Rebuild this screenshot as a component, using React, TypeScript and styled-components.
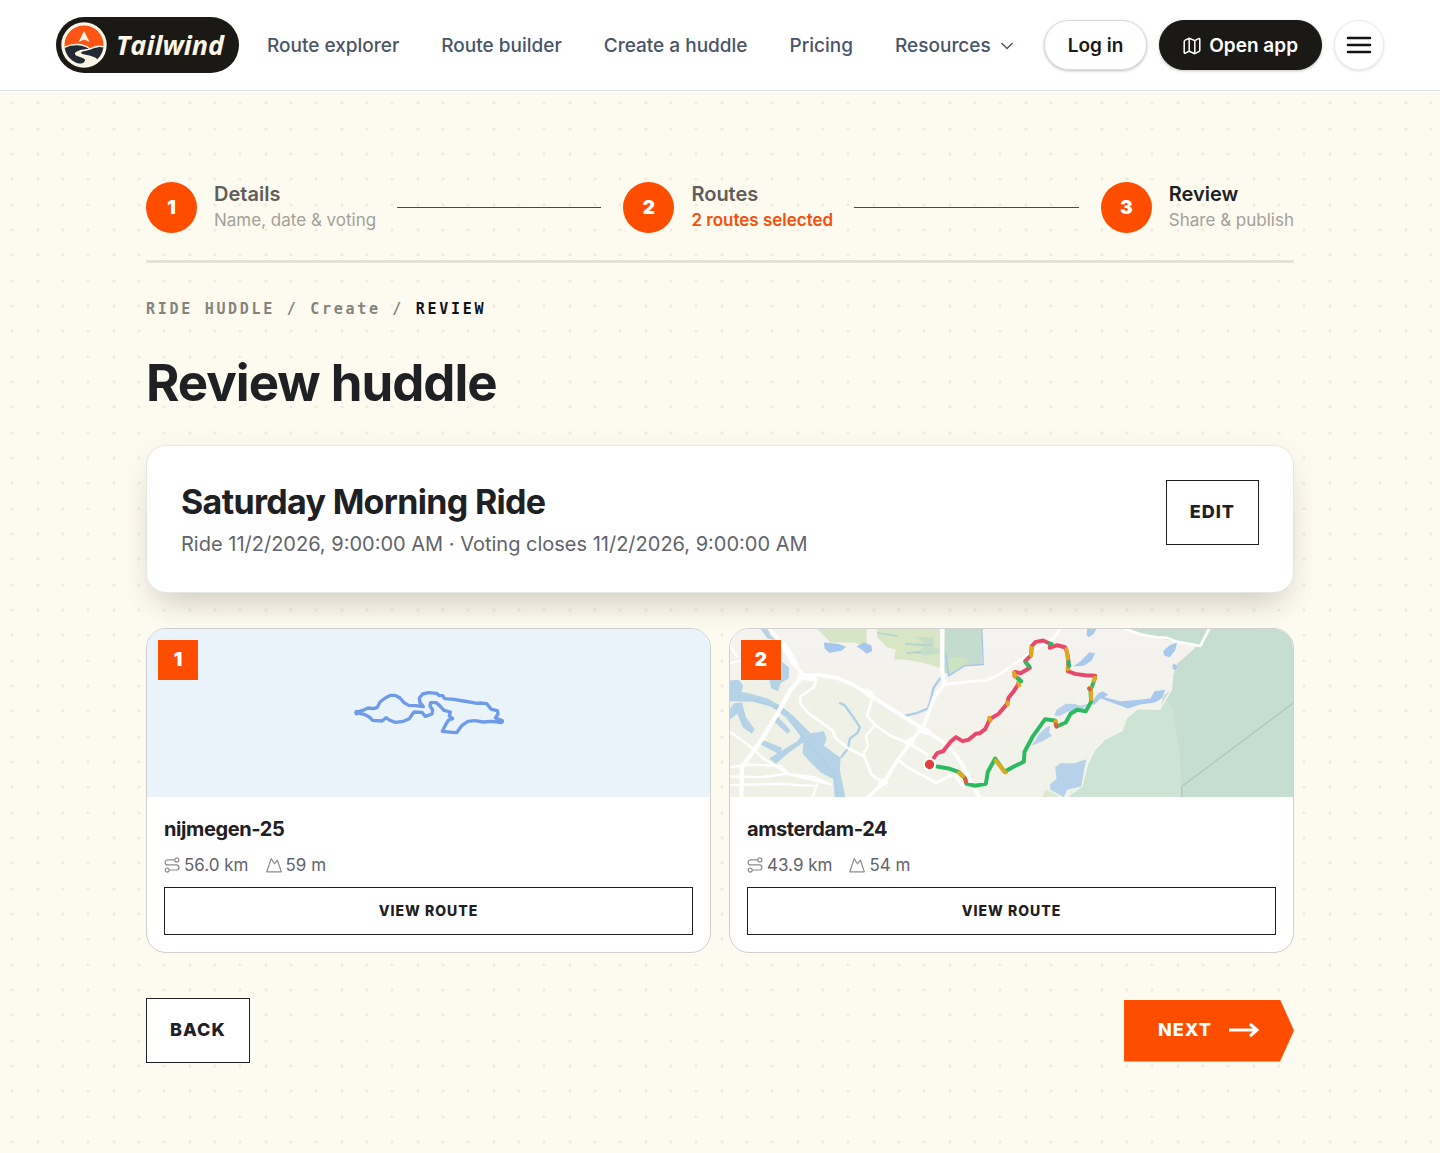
import React from "react";
import styled, { createGlobalStyle, css } from "styled-components";

const ink = "#1f2023";
const orange = "#ff4d00";
const sans = `Inter, "Liberation Sans", sans-serif`;
const mono = `"DejaVu Sans Mono", "Liberation Mono", monospace`;

/* Three dots per 76px tile in each direction. */
const stops = [12, 38, 63];
const dotGrid = stops
  .flatMap((y) =>
    stops.map(
      (x) =>
        `radial-gradient(circle at ${x}px ${y}px, #eeece2 1px, transparent 2px)`
    )
  )
  .join(", ");

const Global = createGlobalStyle`
  *, *::before, *::after { box-sizing: border-box; }
  html { min-height: 100%; background: #fdfaef; }
  body { margin: 0; font-family: ${sans}; color: ${ink}; }
  h1, h2, h3, p, ol { margin: 0; padding: 0; }
  h1, h2, h3 { font-weight: 700; letter-spacing: -0.02em; }
  ol { list-style: none; }
  button { font-family: inherit; cursor: pointer; }
`;

const Page = styled.div`
  min-height: 100vh;
  display: flex;
  flex-direction: column;
`;

const Header = styled.header`
  display: flex;
  align-items: center;
  height: 91px;
  padding: 0 56px;
  background: #fff;
  border-bottom: 1px solid #e2e5ea;
`;

const Brand = styled.a`
  display: flex;
  align-items: center;
  gap: 9px;
  min-width: 183px;
  height: 56px;
  padding: 0 5px;
  border-radius: 28px;
  background: #1a1916;
  color: #fbf5e6;
  font: italic 700 27px/32px "Open Sans", ${sans};
  text-decoration: none;
  svg { flex: none; }
`;

const Nav = styled.nav`
  display: flex;
  align-items: center;
  gap: 42px;
  margin-left: 28px;
`;

const navItem = css`
  display: flex;
  align-items: center;
  gap: 8px;
  padding: 2px 0 0;
  border: 0;
  background: none;
  color: #4a5567;
  font: 500 19px/28px ${sans};
  white-space: nowrap;
  text-decoration: none;
`;
const NavLink = styled.a`${navItem}`;
const NavButton = styled.button`${navItem}`;

const Actions = styled.div`
  display: flex;
  align-items: center;
  gap: 12px;
  margin-left: auto;
`;

const Pill = styled.a<{ $dark?: boolean }>`
  display: flex;
  align-items: center;
  gap: 8px;
  height: 50px;
  padding: 2px 23px 0;
  border-radius: 25px;
  border: 1px solid ${(p) => (p.$dark ? "#1a1916" : "#d9dadd")};
  background: ${(p) => (p.$dark ? "#1a1916" : "#fff")};
  color: ${(p) => (p.$dark ? "#fff" : "#1a1916")};
  box-shadow: 0 1px 3px rgba(0, 0, 0, 0.25);
  font: 600 19px/28px ${sans};
  white-space: nowrap;
  text-decoration: none;
`;

const MenuButton = styled.button`
  display: grid;
  place-items: center;
  width: 50px;
  height: 50px;
  padding: 0;
  border: 1px solid #ececef;
  border-radius: 50%;
  background: #fff;
  box-shadow: 0 1px 3px rgba(0, 0, 0, 0.14);
`;

const Canvas = styled.main`
  flex: 1;
  padding: 90px 40px;
  background-color: #fdfaef;
  background-image: ${dotGrid};
  background-size: 76px 76px;
`;

const Content = styled.div`
  max-width: 1148px;
  margin: 0 auto;
`;

const Steps = styled.ol`
  display: flex;
  align-items: center;
  padding-bottom: 27px;
  border-bottom: 3px solid #e4e2d8;
`;

const Step = styled.li`
  display: flex;
  flex: 1;
  align-items: center;
  gap: 17px;
  &:last-child { flex: none; }
`;

const StepNumber = styled.span`
  display: grid;
  place-items: center;
  width: 51px;
  height: 51px;
  border-radius: 50%;
  background: ${orange};
  color: #fff;
  font-size: 19px;
  font-weight: 900;
`;

const StepTitle = styled.p<{ $current?: boolean }>`
  color: ${(p) => (p.$current ? ink : "#5f5e5c")};
  font-size: 20px;
  font-weight: 600;
  line-height: 26px;
`;

const StepNote = styled.p<{ $strong?: boolean }>`
  color: ${(p) => (p.$strong ? "#f4500c" : "#a3a19b")};
  font-size: 17px;
  font-weight: ${(p) => (p.$strong ? 600 : 400)};
  line-height: 26px;
  white-space: nowrap;
`;

const Connector = styled.span`
  flex: 1;
  height: 1px;
  margin: 0 22px 0 4px;
  background: #4b4949;
`;

const Crumbs = styled.nav`
  margin-top: 36px;
  color: #85837d;
  font: 700 15px/20px ${mono};
  letter-spacing: 0.18em;
  white-space: pre;
  a { color: inherit; text-decoration: none; }
  strong { color: #131417; }
`;

const PageTitle = styled.h1`
  margin-top: 32px;
  font-size: 51px;
  line-height: 64px;
`;

const Summary = styled.section`
  display: flex;
  align-items: flex-start;
  justify-content: space-between;
  gap: 24px;
  margin-top: 30px;
  padding: 34px;
  border: 1px solid #e6e6e4;
  border-radius: 20px;
  background: #fff;
  box-shadow: 0 20px 32px -14px rgba(50, 45, 30, 0.22),
    0 8px 36px rgba(50, 45, 30, 0.05);
`;

const RideName = styled.h2`
  font-size: 34px;
  line-height: 44px;
`;

const RideDates = styled.p`
  margin-top: 6px;
  color: #62646b;
  font-size: 20px;
  line-height: 28px;
`;

const actionText = css<{ $small?: boolean }>`
  font-size: ${(p) => (p.$small ? 14 : 18)}px;
  font-weight: 800;
  letter-spacing: 1px;
`;

const OutlineButton = styled.button<{ $small?: boolean }>`
  ${actionText}
  width: ${(p) => (p.$small ? "100%" : "auto")};
  height: ${(p) => (p.$small ? 48 : 65)}px;
  padding: 0 23px 2px;
  border: 1px solid ${ink};
  background: #fff;
  color: ${ink};
`;

const Routes = styled.section`
  display: grid;
  grid-template-columns: 1fr 1fr;
  gap: 18px;
  margin-top: 35px;
`;

const Card = styled.article`
  position: relative;
  overflow: hidden;
  border: 1px solid #cfcfd1;
  border-radius: 20px;
  background: #fff;
`;

const Badge = styled.span`
  position: absolute;
  top: 11px;
  left: 11px;
  display: grid;
  place-items: center;
  width: 40px;
  height: 40px;
  padding-bottom: 2px;
  background: ${orange};
  color: #fff;
  font-size: 19px;
  font-weight: 900;
`;

const Preview = styled.div`
  display: grid;
  place-items: center;
  height: 168px;
  background: #eaf3fa;
  overflow: hidden;
`;

const CardBody = styled.div`
  padding: 18px 17px 17px;
`;

const RouteName = styled.h3`
  font-size: 20px;
  line-height: 28px;
`;

const Stats = styled.div`
  display: flex;
  gap: 17px;
  margin: 8px 0;
`;

const Stat = styled.span`
  display: flex;
  align-items: center;
  gap: 4px;
  color: #62646b;
  font-size: 17px;
  line-height: 28px;
  svg { color: #8d8d8f; }
`;

const Footer = styled.div`
  display: flex;
  align-items: center;
  justify-content: space-between;
  margin-top: 45px;
`;

const NextButton = styled.button`
  ${actionText}
  display: flex;
  align-items: center;
  gap: 17px;
  height: 62px;
  padding: 0 34px 2px;
  border: 0;
  background: ${orange};
  clip-path: polygon(0 0, calc(100% - 14px) 0, 100% 50%, calc(100% - 14px) 100%, 0 100%);
  color: #fff;
`;

const LogoMark = () => (
  <svg width="46" height="46" viewBox="0 0 46 46" aria-hidden="true">
    <defs>
      <clipPath id="mark"><circle cx="23" cy="23" r="19.5" /></clipPath>
    </defs>
    <circle cx="23" cy="23" r="22.7" fill="#fbf5e6" />
    <g clipPath="url(#mark)">
      <path d="M0 0H46V26C38 23 34 25 29 27C22 22 14 22 4 26H0Z" fill="#ff5514" />
      <path d="M2 27C9 22 22 22 28 27C18 27 10 31 16 34C22 36 27 37 22 41C14 44 6 38 4 32Z" fill="#232a33" />
      <path d="M44 25C34 24 30 28 24 29C18 30 19 32 26 33C36 35 38 38 38 41C42 38 44 34 44 25Z" fill="#232a33" />
      <path d="M2 26C12 20 24 22 29 27C35 23 40 24 44 25" fill="none" stroke="#fbf5e6" strokeWidth="1.3" />
    </g>
    <path d="M23 9L28.6 20L23 17.6L17.6 20Z" fill="#fbf5e6" />
  </svg>
);

const RouteIcon = () => (
  <svg width="16" height="16" viewBox="0 0 16 16" fill="none" stroke="currentColor" strokeWidth="1.2" aria-hidden="true">
    <circle cx="12.8" cy="2.9" r="2" />
    <circle cx="3.2" cy="13.1" r="2" />
    <path d="M10.8 2.9H3.6a2.5 2.5 0 0 0 0 5H12.4a2.5 2.5 0 0 1 0 5.1H5.2" />
  </svg>
);

const PeakIcon = () => (
  <svg width="16" height="16" viewBox="0 0 16 16" fill="none" stroke="currentColor" strokeWidth="1.2" strokeLinejoin="round" aria-hidden="true">
    <path d="M.8 14.8L5.2 1.6L8.4 6.8L11.4 3.2L15.3 14.8Z" />
  </svg>
);

const MapIcon = () => (
  <svg width="18" height="18" viewBox="0 0 18 18" fill="none" stroke="currentColor" strokeWidth="1.5" strokeLinejoin="round" aria-hidden="true">
    <path d="M1.2 4.6Q1.2 3.6 2.2 3.1L6.2 1.3L11.8 3.6L15.6 1.6Q16.8 1.2 16.8 2.4V13.2Q16.8 14.2 15.8 14.7L11.8 16.7L6.2 14.2L2.4 16.2Q1.2 16.6 1.2 15.4ZM6.2 1.3V14.2M11.8 3.6V16.7" />
  </svg>
);

const LoopRoute = () => (
  <svg width="180" height="80" viewBox="-3 9 540 240" fill="none" stroke="#6d9bea" strokeWidth="10" strokeLinejoin="round" strokeLinecap="round" role="img" aria-label="nijmegen-25 route">
    <path d="M48 128L66 122L84 114L100 116L112 112L120 96L136 84L152 76L166 76L180 84L192 98L206 106L228 107L250 110L240 98L238 84L248 72L266 68L290 70L298 77L308 77L314 86L342 88L370 93L412 100L420 99L440 101L454 118L472 122L474 132L466 144L486 152L484 158L474 156L452 154L430 156L404 152L384 154L366 166L350 188L338 187L307 184L318 162L326 150L338 146L328 138L331 126L312 121L298 106L288 98L272 98L270 108L278 120L276 132L256 139L246 127L222 126L208 146L190 154L166 157L148 150L138 143L126 153L98 151L88 141L72 133Z" />
    <path d="M50 126V130M480 154H486" strokeWidth="13" />
  </svg>
);

const AreaMap = () => (
  <svg width="100%" height="168" viewBox="28 25 1690 505" preserveAspectRatio="xMidYMid slice" fill="none" strokeLinecap="round" strokeLinejoin="round" role="img" aria-label="amsterdam-24 route map">
    <defs>
      <linearGradient id="land" x1="0" y1="0" x2="0" y2="1">
        <stop offset="0" stopColor="#f5f2ef" />
        <stop offset="0.45" stopColor="#f4f2ed" />
        <stop offset="0.7" stopColor="#f1f2e9" />
      </linearGradient>
    </defs>
    <rect x="0" y="0" width="1760" height="560" fill="url(#land)" />
    <path d="M28 180L240 190L300 176L400 200L560 310L540 400L440 530H28Z" fill="#eff1e7" />
    <path d="M290 25H438V84L404 66L330 66Z" fill="#d5e5c5" />
    <path d="M468 25H658V142L604 126L552 118L520 116L526 88L500 80L470 50Z" fill="#d8e6c6" />
    <path d="M586 48L640 52V84L658 86V98L618 104L584 100L610 80L570 74L610 66Z" fill="#c5deca" />
    <path d="M672 25H784V132L730 136L690 164L672 156Z" fill="#c4dccd" />
    <path d="M680 114L706 108L748 118L730 138L690 164Z" fill="#cde2c2" />
    <path d="M784 25L788 132L732 136L684 166L676 100" stroke="#a5c5ec" strokeWidth="4" />
    <path d="M474 38L528 46M556 70L630 74M560 98L600 94" stroke="#b3d3cc" strokeWidth="5" />
    <path d="M310 66L350 70L376 78L364 90L326 97L312 84Z M408 78L430 66L452 74L455 92L438 100L424 88Z" fill="#a4c6ef" />
    {/* Harbour and canals */}
    <g fill="#b5d2e7">
      <path d="M120 25L150 25L146 40L164 58L140 54Z" />
      <path d="M28 180L54 178L68 196L62 214L90 220L140 234L180 256L216 284L270 338L310 332L318 356L310 376L346 402L360 412L358 450L374 530H342L338 476L300 456L270 426L246 400L248 366L200 400L166 430L146 414L180 392L230 362L240 348L200 292L150 258L96 244L28 242Z" />
      <path d="M40 248L64 246L76 290L102 326L94 340L66 320L50 280L28 296V266Z" />
      <path d="M124 358L184 382L178 402L120 372Z M168 284L210 330L200 340L160 302Z M184 124L206 142L204 174L180 188L172 212L152 204L146 178H182Z" />
    </g>
    <path d="M100 238L170 262L230 330L290 400L340 458L350 520" stroke="#a7c8e1" strokeWidth="2" />
    <path d="M358 248L372 254L398 290L418 320L410 338L388 354L382 384L362 410" stroke="#b0cfe6" strokeWidth="7" />
    <path d="M658 174L638 204L630 240L622 264L588 278L552 286" stroke="#aecdea" strokeWidth="7" />
    {/* Roads */}
    <g stroke="#fff">
      <path d="M146 25L186 70L208 104L226 136L248 164L300 164L350 172L396 192L446 222L520 270L612 328L670 366L700 394L730 440L776 530" strokeWidth="11" />
      <path d="M190 76L224 132" strokeWidth="20" />
      <path d="M248 164L210 208L170 280L120 362L94 398L64 440L62 530" strokeWidth="13" />
      <path d="M666 25L664 150L672 190L640 232L612 310L570 366L530 420L490 486L442 530" strokeWidth="11" />
      <path d="M672 192L760 182L800 180L840 160L900 118L1000 52L1020 25" strokeWidth="8" />
      <path d="M286 176L282 198L240 228L238 248L266 280L336 330L344 352L380 382L432 408L452 462L490 488" strokeWidth="8" />
      <path d="M454 236L440 286L462 312L510 346L568 370L620 402" strokeWidth="8" />
      <path d="M460 318L436 346L442 376L428 402" strokeWidth="7" />
      <path d="M536 420L560 440L646 486L700 462L730 500" strokeWidth="8" />
      <path d="M28 334L84 374L128 414L206 462L290 482L330 492M28 440L90 432L180 436L202 458M28 468L120 470L200 460L280 470L330 492M28 494L180 490L280 496M290 490L276 530" strokeWidth="7" />
      <path d="M28 128L64 120M28 76L50 110" strokeWidth="6" />
      <path d="M240 166L276 172M438 214L450 222M602 326L620 334M562 366L574 360M484 484L492 486" strokeWidth="20" />
    </g>
    {/* Lake and nature reserve */}
    <path d="M1214 25H1760V560H1030L1050 516L1080 498L1100 430L1120 392L1152 356L1204 332L1216 296L1250 266L1318 268L1330 226L1352 206L1356 170L1370 130L1420 86L1430 74L1400 70L1350 60L1300 50L1250 40Z" fill="#c6ddd2" />
    <path d="M1040 530L1082 498L1102 430L1120 392L1152 356L1204 332L1216 296L1250 266L1318 268L1336 240L1358 262L1378 400L1384 530Z" fill="#cde3d3" />
    <path d="M966 530L976 508L1010 524L1012 530Z" fill="#dbe8d0" />
    <path d="M1214 25L1262 42L1310 50L1340 52L1370 64L1440 76L1466 25" stroke="#fff" strokeWidth="8" />
    <path d="M1040 528L1084 496L1102 428L1122 388L1152 356L1204 330L1218 292L1250 264L1318 266L1352 208L1356 170" stroke="#f4f5ed" strokeWidth="5" />
    <path d="M1384 530V498L1718 248" stroke="#b2c6bf" strokeWidth="4" />
    <g fill="#a9c9ec">
      <path d="M1100 25H1128L1118 42L1104 50L1098 42Z M1058 138L1080 122L1106 96L1124 98L1114 120L1090 136Z M1328 92L1348 74L1370 66L1364 90L1348 110L1332 106Z M1358 128L1370 136L1366 150L1356 144Z" />
      <path d="M1114 244L1132 220L1146 212L1164 222L1152 230L1200 242L1256 238L1290 234L1302 212L1334 208L1326 232L1304 246L1260 252L1222 264L1180 248L1140 234L1120 254Z" />
    </g>
    <path d="M1002 286L1008 268L1036 250L1060 250L1080 256L1104 250L1080 270L1044 272L1020 286Z M934 376L956 340L978 320L990 316L986 336L994 346L966 362Z M988 492L1008 476L1004 440L1020 428L1062 428L1098 416L1090 452L1082 498L1040 508L1030 530L990 508Z" fill="#b6d1e9" />
    {/* Ride, coloured by gradient */}
    <g strokeWidth="12">
      <path d="M640 412L650 398L668 392L690 364L706 350L726 362L744 358L766 340L778 338L794 326L808 296L834 280L860 250L864 232L880 212L894 190L896 176L882 166L884 154L900 158L928 142L914 122L932 104L934 76L946 64L968 60L990 70L988 82L1010 74L1034 80L1040 96L1044 120L1042 152L1064 160L1094 164L1124 166" stroke="#e8486a" />
      <path d="M650 438L684 444L714 454L734 474L738 490L764 496L796 490L802 454L824 414L852 454L880 438L910 424L912 394L938 346L974 296L1004 300L1008 318L1036 306L1050 280L1070 268L1096 272L1112 244L1110 210L1124 172" stroke="#2cba61" />
      <path d="M716 456L728 468M826 420L852 454M1006 302L1008 312M1112 236L1112 212M1108 202L1112 208M1124 172L1120 180M806 292L810 300M860 246L862 252M894 184L896 194M880 156L886 170M932 82L932 104M1038 86L1042 114M1042 138L1042 146M852 454L856 456" stroke="#deaa1c" />
      <path d="M916 126L926 138M892 174L902 182M1044 124L1046 136M988 70L994 70" stroke="#2cba61" />
      <path d="M734 476L736 484M1006 312L1008 318M1106 204L1108 206" stroke="#dc5a4c" />
    </g>
    <circle cx="627" cy="432" r="20" fill="#fff" />
    <circle cx="627" cy="432" r="14" fill="#e63f42" />
  </svg>
);

const steps = [
  { title: "Details", note: "Name, date & voting" },
  { title: "Routes", note: "2 routes selected", strong: true },
  { title: "Review", note: "Share & publish", current: true },
];

const routes = [
  { name: "nijmegen-25", distance: "56.0 km", climb: "59 m", preview: <LoopRoute /> },
  { name: "amsterdam-24", distance: "43.9 km", climb: "54 m", preview: <AreaMap /> },
];

export default function App() {
  return (
    <Page>
      <Global />
      <Header>
        <Brand href="#home">
          <LogoMark />
          Tailwind
        </Brand>
        <Nav aria-label="Main">
          <NavLink href="#explorer">Route explorer</NavLink>
          <NavLink href="#builder">Route builder</NavLink>
          <NavLink href="#huddle">Create a huddle</NavLink>
          <NavLink href="#pricing">Pricing</NavLink>
          <NavButton type="button">
            Resources
            <svg width="16" height="16" viewBox="0 0 16 16" fill="none" stroke="currentColor" strokeWidth="1.5" aria-hidden="true">
              <path d="M2.5 5L8 10.5L13.5 5" />
            </svg>
          </NavButton>
        </Nav>
        <Actions>
          <Pill href="#login">Log in</Pill>
          <Pill href="#app" $dark>
            <MapIcon />
            Open app
          </Pill>
          <MenuButton type="button" aria-label="Menu">
            <svg width="26" height="18" viewBox="0 0 26 18" stroke="#131313" strokeWidth="2.6" strokeLinecap="round" aria-hidden="true">
              <path d="M2 2H24M2 9H24M2 16H24" />
            </svg>
          </MenuButton>
        </Actions>
      </Header>
      <Canvas>
        <Content>
          <Steps>
            {steps.map((s, i) => (
              <Step key={s.title}>
                <StepNumber>{i + 1}</StepNumber>
                <div>
                  <StepTitle $current={s.current}>{s.title}</StepTitle>
                  <StepNote $strong={s.strong}>{s.note}</StepNote>
                </div>
                {i < steps.length - 1 && <Connector />}
              </Step>
            ))}
          </Steps>
          <Crumbs aria-label="Breadcrumb">
            <a href="#huddles">RIDE HUDDLE</a> / <a href="#create">Create</a> / <strong>REVIEW</strong>
          </Crumbs>
          <PageTitle>Review huddle</PageTitle>
          <Summary>
            <div>
              <RideName>Saturday Morning Ride</RideName>
              <RideDates>Ride 11/2/2026, 9:00:00 AM · Voting closes 11/2/2026, 9:00:00 AM</RideDates>
            </div>
            <OutlineButton type="button">EDIT</OutlineButton>
          </Summary>
          <Routes>
            {routes.map((r, i) => (
              <Card key={r.name}>
                <Preview>{r.preview}</Preview>
                <Badge>{i + 1}</Badge>
                <CardBody>
                  <RouteName>{r.name}</RouteName>
                  <Stats>
                    <Stat><RouteIcon />{r.distance}</Stat>
                    <Stat><PeakIcon />{r.climb}</Stat>
                  </Stats>
                  <OutlineButton type="button" $small>VIEW ROUTE</OutlineButton>
                </CardBody>
              </Card>
            ))}
          </Routes>
          <Footer>
            <OutlineButton type="button">BACK</OutlineButton>
            <NextButton type="button">
              NEXT
              <svg width="31" height="16" viewBox="0 0 31 16" fill="none" stroke="currentColor" strokeWidth="3" aria-hidden="true">
                <path d="M0 8H28M21 2L28 8L21 14" />
              </svg>
            </NextButton>
          </Footer>
        </Content>
      </Canvas>
    </Page>
  );
}
